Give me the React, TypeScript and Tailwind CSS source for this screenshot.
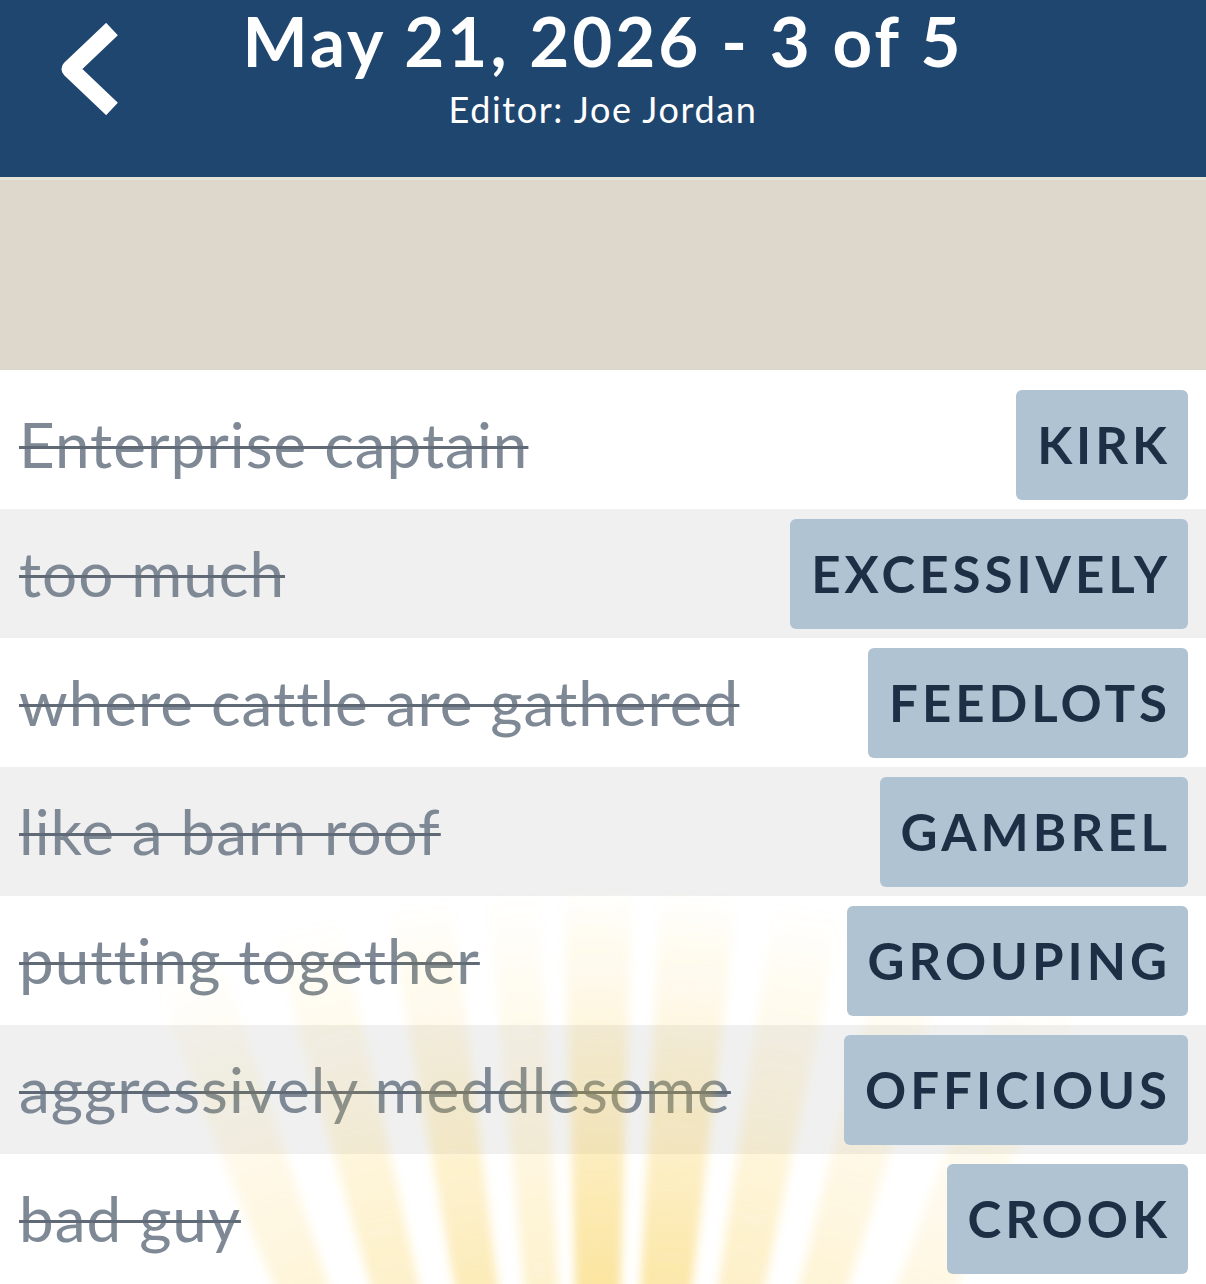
import React from "react";

type Entry = { clue: string; answer: string };

const entries: Entry[] = [
  { clue: "Enterprise captain", answer: "KIRK" },
  { clue: "too much", answer: "EXCESSIVELY" },
  { clue: "where cattle are gathered", answer: "FEEDLOTS" },
  { clue: "like a barn roof", answer: "GAMBREL" },
  { clue: "putting together", answer: "GROUPING" },
  { clue: "aggressively meddlesome", answer: "OFFICIOUS" },
  { clue: "bad guy", answer: "CROOK" },
];

// soft sunburst glowing up from below the list
const Rays = () => {
  const cx = 598;
  const cy = 2100;
  const r = 1400;
  // [angle from vertical, half width, strength]
  const rays: [number, number, number][] = [
    [-20, 1.7, 0.45],
    [-14, 1.6, 0.6],
    [-8.5, 1.5, 0.75],
    [-4, 1.2, 0.5],
    [0, 1.6, 1],
    [4.8, 1.8, 0.9],
    [10, 1.6, 0.6],
    [15.5, 1.6, 0.45],
    [22, 1.8, 0.35],
  ];
  const pt = (deg: number) => {
    const a = (deg * Math.PI) / 180;
    return `${cx + r * Math.sin(a)},${cy - r * Math.cos(a)}`;
  };
  return (
    <svg
      className="absolute inset-0 pointer-events-none"
      width="1206"
      height="1284"
      viewBox="0 0 1206 1284"
    >
      <defs>
        <radialGradient id="glow" cx={cx} cy={cy} r="1250" gradientUnits="userSpaceOnUse">
          <stop offset="0" stopColor="#f7c52c" stopOpacity="0.55" />
          <stop offset="0.62" stopColor="#f7c52c" stopOpacity="0.5" />
          <stop offset="0.8" stopColor="#f7c52c" stopOpacity="0.24" />
          <stop offset="0.97" stopColor="#f7c52c" stopOpacity="0" />
        </radialGradient>
        <filter id="soft" x="-10%" y="-10%" width="120%" height="120%">
          <feGaussianBlur stdDeviation="5" />
        </filter>
      </defs>
      <g filter="url(#soft)">
        {rays.map(([c, w, s], i) => (
          <polygon
            key={i}
            points={`${cx},${cy} ${pt(c - w)} ${pt(c + w)}`}
            fill="url(#glow)"
            opacity={s}
          />
        ))}
      </g>
    </svg>
  );
};

const BackChevron = () => (
  <svg width="64" height="92" viewBox="0 0 64 92" fill="none">
    <polyline
      points="54,6 12,46 54,86"
      stroke="white"
      strokeWidth="17"
      strokeLinejoin="round"
      strokeLinecap="butt"
    />
  </svg>
);

export default function App() {
  return (
    <div
      className="relative w-full h-[1284px] overflow-hidden bg-white"
      style={{ fontFamily: "Lato, 'Open Sans', sans-serif" }}
    >
      <div className="flex flex-col">
        <header className="h-[177px] bg-[#1f466f] grid grid-cols-[180px_1fr_180px]">
          <div className="flex items-start pl-[58px] pt-[23px]">
            <BackChevron />
          </div>
          <div className="flex flex-col items-center text-white">
            <h1 className="text-[69px] font-bold leading-[1.2] tracking-[3px] whitespace-nowrap">
              May 21, 2026 - 3 of 5
            </h1>
            <div className="text-[36px] leading-[1.2] mt-[5px] tracking-[1.6px]">
              Editor: Joe Jordan
            </div>
          </div>
          <div />
        </header>
        <div className="h-[193px] bg-[#ddd8cb] border-t-[3px] border-[#e6e3da]" />
        <div className="pt-[10px] bg-white">
          {entries.map((e, i) => (
            <div
              key={e.answer}
              className={`h-[129px] flex items-center justify-between pl-[19px] pr-[18px] ${
                i % 2 === 1 ? "bg-[#f0f0f0]" : "bg-white"
              }`}
            >
              <span className="text-[62px] text-[#7e8995] tracking-[1px] line-through decoration-[#5f6a76] decoration-[3px] leading-[1.2]">
                {e.clue}
              </span>
              <span className="relative z-10 h-[110px] flex items-center pl-[21px] pr-[17px] rounded-[6px] bg-[#b0c3d3] text-[#1c2f45] text-[51px] font-bold tracking-[4px] leading-none">
                {e.answer}
              </span>
            </div>
          ))}
        </div>
      </div>
      <Rays />
    </div>
  );
}
